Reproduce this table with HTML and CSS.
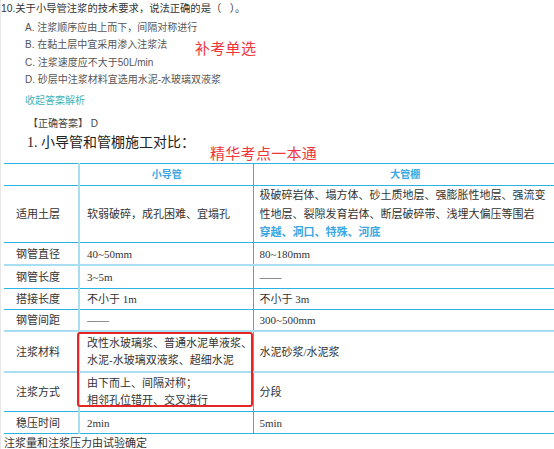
FILE: index.html
```html
<!DOCTYPE html>
<html lang="zh">
<head>
<meta charset="utf-8">
<link rel="stylesheet" href="styles.css">
</head>
<body>
<div class="page">
  <p class="q">10.关于小导管注浆的技术要求，说法正确的是（ &nbsp;&nbsp;）。</p>
  <ul class="opts">
    <li>A. 注浆顺序应由上而下，间隔对称进行</li>
    <li>B. 在黏土层中宜采用渗入注浆法</li>
    <li>C. 注浆速度应不大于50L/min</li>
    <li>D. 砂层中注浆材料宜选用水泥-水玻璃双液浆</li>
  </ul>
  <a class="toggle">收起答案解析</a>
  <p class="answer">【正确答案】 D</p>
  <h2 class="title">1. 小导管和管棚施工对比：</h2>
  <div class="table-wrap">
    <table class="cmp">
      <colgroup><col class="c1"><col class="c2"><col class="c3"></colgroup>
      <tr class="r-head"><th></th><th>小导管</th><th>大管棚</th></tr>
      <tr class="r-soil"><td>适用土层</td><td>软弱破碎，成孔困难、宜塌孔</td><td class="multi">极破碎岩体、塌方体、砂土质地层、强膨胀性地层、强流变<br>性地层、裂隙发育岩体、断层破碎带、浅埋大偏压等围岩<br><span class="hot">穿越、洞口、特殊、河底</span></td></tr>
      <tr class="r-22 light"><td>钢管直径</td><td>40~50mm</td><td>80~180mm</td></tr>
      <tr class="r-23"><td>钢管长度</td><td>3~5m</td><td>——</td></tr>
      <tr class="r-21"><td>搭接长度</td><td>不小于 1m</td><td>不小于 3m</td></tr>
      <tr class="r-21 light"><td>钢管间距</td><td>——</td><td>300~500mm</td></tr>
      <tr class="r-40 light"><td>注浆材料</td><td class="multi2">改性水玻璃浆、普通水泥单液浆、<br>水泥-水玻璃双液浆、超细水泥</td><td>水泥砂浆/水泥浆</td></tr>
      <tr class="r-39"><td>注浆方式</td><td class="multi2">由下而上、间隔对称；<br>相邻孔位错开、交叉进行</td><td>分段</td></tr>
      <tr class="r-22"><td>稳压时间</td><td>2min</td><td>5min</td></tr>
    </table>
    <div class="mark-box"></div>
  </div>
  <p class="note">注浆量和注浆压力由试验确定</p>
  <span class="stamp stamp-1">补考单选</span>
  <span class="stamp stamp-2">精华考点一本通</span>
</div>
</body>
</html>
```
FILE: styles.css
```css
html, body {
  margin: 0;
  padding: 0;
  background: #fff;
  overflow: hidden;
}

.page {
  position: relative;
  width: 554px;
  height: 449px;
  box-sizing: border-box;
  border-left: 1px solid #e6e6e6;
  font-family: "Liberation Sans", "Noto Sans CJK SC", sans-serif;
  color: #333;
  overflow: hidden;
}

.q {
  margin: 0;
  padding-top: 2px;
  font-size: 10.3px;
  line-height: 14px;
  color: #333;
}

.opts {
  list-style: none;
  margin: 3px 0 0;
  padding: 0 0 0 24px;
  font-size: 10px;
  line-height: 17.3px;
  color: #555;
}

.toggle {
  display: block;
  margin: 6px 0 0 24px;
  font-size: 10px;
  line-height: 14px;
  color: #3fb3b8;
}

.answer {
  margin: 9px 0 0 27px;
  font-size: 10px;
  line-height: 14px;
  color: #444;
}

.title {
  margin: 3px 0 0 26px;
  font: normal 14px/18px "Liberation Serif", "Noto Sans CJK SC", serif;
  color: #222;
}

.table-wrap {
  position: relative;
  margin: 11px 0 0 3px;
  width: 553px;
}

.cmp {
  width: 553px;
  table-layout: fixed;
  border-collapse: collapse;
  font-family: "Liberation Serif", "Noto Sans CJK SC", serif;
  font-size: 11px;
  color: #333;
}

.c1 { width: 75px; }
.c2 { width: 174px; }
.c3 { width: 304px; }

.cmp th,
.cmp td {
  border-top: 1px solid #2cb3e6;
  border-bottom: 1px solid #2cb3e6;
  padding: 0 6px;
  vertical-align: middle;
  text-align: left;
  line-height: 16px;
  white-space: nowrap;
}

.cmp td:first-child,
.cmp th:first-child {
  padding-left: 12px;
  border-right: 2px solid #a9def2;
}

.cmp td:nth-child(2),
.cmp th:nth-child(2) {
  padding-left: 7px;
  padding-right: 0;
  border-right: 1px solid #2cb3e6;
}

.cmp th {
  font-family: "Liberation Sans", "Noto Sans CJK SC", sans-serif;
  font-size: 10px;
  font-weight: bold;
  color: #3aa7e2;
  text-align: center;
}

.cmp th:nth-child(2) { padding-right: 6px; }

.r-head th { height: 21px; }
.r-soil td { height: 56px; }
.r-22 td { height: 21px; }
.r-23 td { height: 22px; }
.r-21 td { height: 20px; }
.r-40 td { height: 39px; }
.r-39 td { height: 38px; }

.cmp tr.light td {
  border-bottom: 2px solid #a9def2;
}

.cmp .multi { line-height: 18.5px; }
.cmp .multi2 { line-height: 17px; }

.hot {
  color: #3aa7e2;
  font-family: "Liberation Sans", "Noto Sans CJK SC", sans-serif;
  font-weight: bold;
}

.mark-box {
  position: absolute;
  left: 73px;
  top: 169px;
  width: 176px;
  height: 75px;
  box-sizing: border-box;
  border: 2px solid #e62424;
  border-radius: 3px;
}

.note {
  margin: 2px 0 0 3px;
  font-family: "Liberation Serif", "Noto Sans CJK SC", serif;
  font-size: 11px;
  line-height: 14px;
  color: #333;
}

.stamp {
  position: absolute;
  font-family: "Noto Sans CJK SC", sans-serif;
  font-size: 15px;
  line-height: 18px;
  color: #f0353b;
  letter-spacing: 0.3px;
}

.stamp-1 { left: 194px; top: 39px; }
.stamp-2 { left: 209px; top: 144px; }
```
